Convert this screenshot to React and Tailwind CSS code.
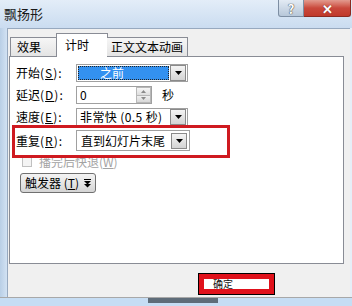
import React from "react";

const font = { fontFamily: '"Noto Sans CJK SC", "Noto Sans", sans-serif' };

function Arrow() {
  return (
    <svg width="7" height="4" viewBox="0 0 7 4">
      <path d="M0 0 H7 L3.5 4 Z" fill="#000" />
    </svg>
  );
}

function DropBtn() {
  return (
    <div className="w-[16px] h-[16px] mr-[1px] flex items-center justify-center border border-[#8a8a8a] bg-gradient-to-b from-[#f4f4f4] to-[#d4d4d4]">
      <Arrow />
    </div>
  );
}

function Label({ children, k }) {
  return (
    <div className="w-[60px] text-[12px] leading-none text-[#000] whitespace-nowrap">
      {children}<span className="tracking-[1px]">(<span className="underline">{k}</span>):</span>
    </div>
  );
}

export default function App() {
  return (
    <div className="w-[352px] h-[306px] flex flex-col overflow-hidden bg-[#c9dcf0]" style={font}>
      {/* title bar */}
      <div className="h-[28px] flex items-start bg-gradient-to-b from-[#e3edf8] to-[#cadcf0]">
        <div className="pl-[4px] pt-[7px] text-[13px] leading-none text-[#1a1a1a]">飘扬形</div>
        <div className="ml-auto mr-[1px] flex">
          <div className="w-[26px] h-[17px] flex items-center justify-center rounded-bl-[3px] border border-t-0 border-[#7d8ea3] bg-gradient-to-b from-[#e3ebf4] to-[#b7c7d9] text-[13px] leading-none font-bold text-white" style={{ textShadow: "0 0 1px #333, 0 0 1px #333" }}>?</div>
          <div className="w-[47px] h-[17px] flex items-center justify-center rounded-br-[3px] border border-t-0 border-l-0 border-[#8b2a22] bg-gradient-to-b from-[#e29a8f] via-[#c9483c] to-[#c0392b] text-[13px] leading-none font-bold text-white" style={{ textShadow: "0 0 1px #5a1010" }}>✕</div>
        </div>
      </div>

      {/* middle */}
      <div className="flex-1 flex min-h-0">
        <div className="w-[7px] bg-gradient-to-r from-[#b9cfe6] to-[#d2e2f3]" />
        <div className="flex-1 flex flex-col bg-[#f0f0f0] border-l border-t border-[#97a9bf] pl-[1px] pr-[6px] pt-[4px]">
          {/* tabs */}
          <div className="h-[24px] flex items-end relative z-10">
            <div className="ml-[1px] w-[47px] h-[19px] mb-px border border-b-0 border-[#898c95] bg-gradient-to-b from-[#f6f6f6] to-[#e4e4e4] text-[12px] leading-none pl-[6px] pt-[3px]">效果</div>
            <div className="w-[52px] h-[24px] -ml-px border border-b-0 border-[#898c95] bg-white text-[12px] leading-none pl-[8px] pt-[5px]">计时</div>
            <div className="w-[81px] h-[19px] mb-px -ml-px border border-b-0 border-l-0 border-[#898c95] bg-gradient-to-b from-[#f6f6f6] to-[#e4e4e4] text-[12px] leading-none pl-[4px] pt-[3px] whitespace-nowrap">正文文本动画</div>
          </div>
          {/* panel */}
          <div className="-mt-px h-[208px] border border-[#898c95] bg-white relative pl-[6px] pt-[7px]">
            {/* row 1 */}
            <div className="flex items-center h-[18px]">
              <Label k="S">开始</Label>
              <div className="w-[112px] h-[18px] flex items-center border border-[#a0a0a0] bg-white">
                <div className="flex-1 h-[14px] mx-[1px] border border-dotted border-[#222] bg-[#3391f0] text-white text-[12px] leading-[12px] pl-[21px]">之前</div>
                <DropBtn />
              </div>
            </div>
            {/* row 2 */}
            <div className="flex items-center h-[18px] mt-[4px]">
              <Label k="D">延迟</Label>
              <div className="w-[76px] h-[18px] flex border border-[#a0a0a0] bg-white">
                <div className="flex-1 text-[12px] leading-[16px] pl-[3px]">0</div>
                <div className="w-[15px] flex flex-col">
                  <div className="flex-1 flex items-center justify-center border border-[#b8b8b8] bg-gradient-to-b from-[#f6f6f6] to-[#dedede]">
                    <svg width="5" height="3" viewBox="0 0 5 3"><path d="M0 3 H5 L2.5 0 Z" fill="#8a8a8a" /></svg>
                  </div>
                  <div className="flex-1 flex items-center justify-center border border-t-0 border-[#b8b8b8] bg-gradient-to-b from-[#f0f0f0] to-[#d8d8d8]">
                    <svg width="5" height="3" viewBox="0 0 5 3"><path d="M0 0 H5 L2.5 3 Z" fill="#8a8a8a" /></svg>
                  </div>
                </div>
              </div>
              <div className="ml-[10px] text-[12px] leading-none">秒</div>
            </div>
            {/* row 3 */}
            <div className="flex items-center h-[18px] mt-[4px]">
              <Label k="E">速度</Label>
              <div className="w-[112px] h-[18px] flex items-center border border-[#a0a0a0] bg-white">
                <div className="flex-1 text-[12px] leading-none pl-[3px] whitespace-nowrap tracking-[0.4px]">非常快 (0.5 秒)</div>
                <DropBtn />
              </div>
            </div>
            {/* row 4 */}
            <div className="flex items-center h-[21px] mt-[4px]">
              <Label k="R">重复</Label>
              <div className="w-[114px] h-[21px] flex items-center border border-[#a0a0a0] bg-white">
                <div className="flex-1 text-[12px] leading-none pl-[4px] whitespace-nowrap">直到幻灯片末尾</div>
                <div className="mr-[1px]"><DropBtn /></div>
              </div>
            </div>
            {/* checkbox */}
            <div className="flex items-center h-[14px] mt-[4px] pl-[6px]">
              <div className="w-[10px] h-[10px] border border-[#c0c0c0] bg-[#f4f4f4]" />
              <div className="ml-[7px] text-[12px] leading-none text-[#a3a3a3]">播完后快退(<span className="underline">W</span>)</div>
            </div>
            {/* trigger button */}
            <div className="mt-[4px] ml-[4px] w-[76px] h-[20px] flex items-center rounded-[3px] border border-[#707070] bg-gradient-to-b from-[#f3f3f3] via-[#e6e6e6] to-[#d4d4d4] pl-[4px]">
              <span className="text-[12px] leading-none">触发器 (<span className="underline">T</span>)</span>
              <svg className="ml-[5px]" width="7" height="9" viewBox="0 0 7 9">
                <path d="M0 0 H7 V1 H0 Z" fill="#000" />
                <path d="M0 2 H7 L3.5 5.5 Z" fill="#000" />
                <path d="M0 5 H7 L3.5 8.5 Z" fill="#000" />
              </svg>
            </div>
            {/* red highlight annotation */}
            <div className="absolute left-[2px] top-[68px] w-[218px] h-[33px] border-[3px] border-[#cf1a20]" />
          </div>
          {/* bottom button area */}
          <div className="mt-[9px] ml-[189px] w-[77px] h-[22px] border border-black bg-[#e0111b] p-[5px]">
            <div className="h-full bg-white text-[10px] leading-[10px] pl-[9px] text-[#111]">确定</div>
          </div>
        </div>
        <div className="w-[2px] bg-[#e6eef7]" />
      </div>

      {/* bottom strip */}
      <div className="h-[9px] border-t border-[#a8a8a8] bg-[#c6ddf4] flex items-start">
        <div className="ml-[148px] w-[70px] h-[5px] bg-[#5e6c79]" />
      </div>
    </div>
  );
}
